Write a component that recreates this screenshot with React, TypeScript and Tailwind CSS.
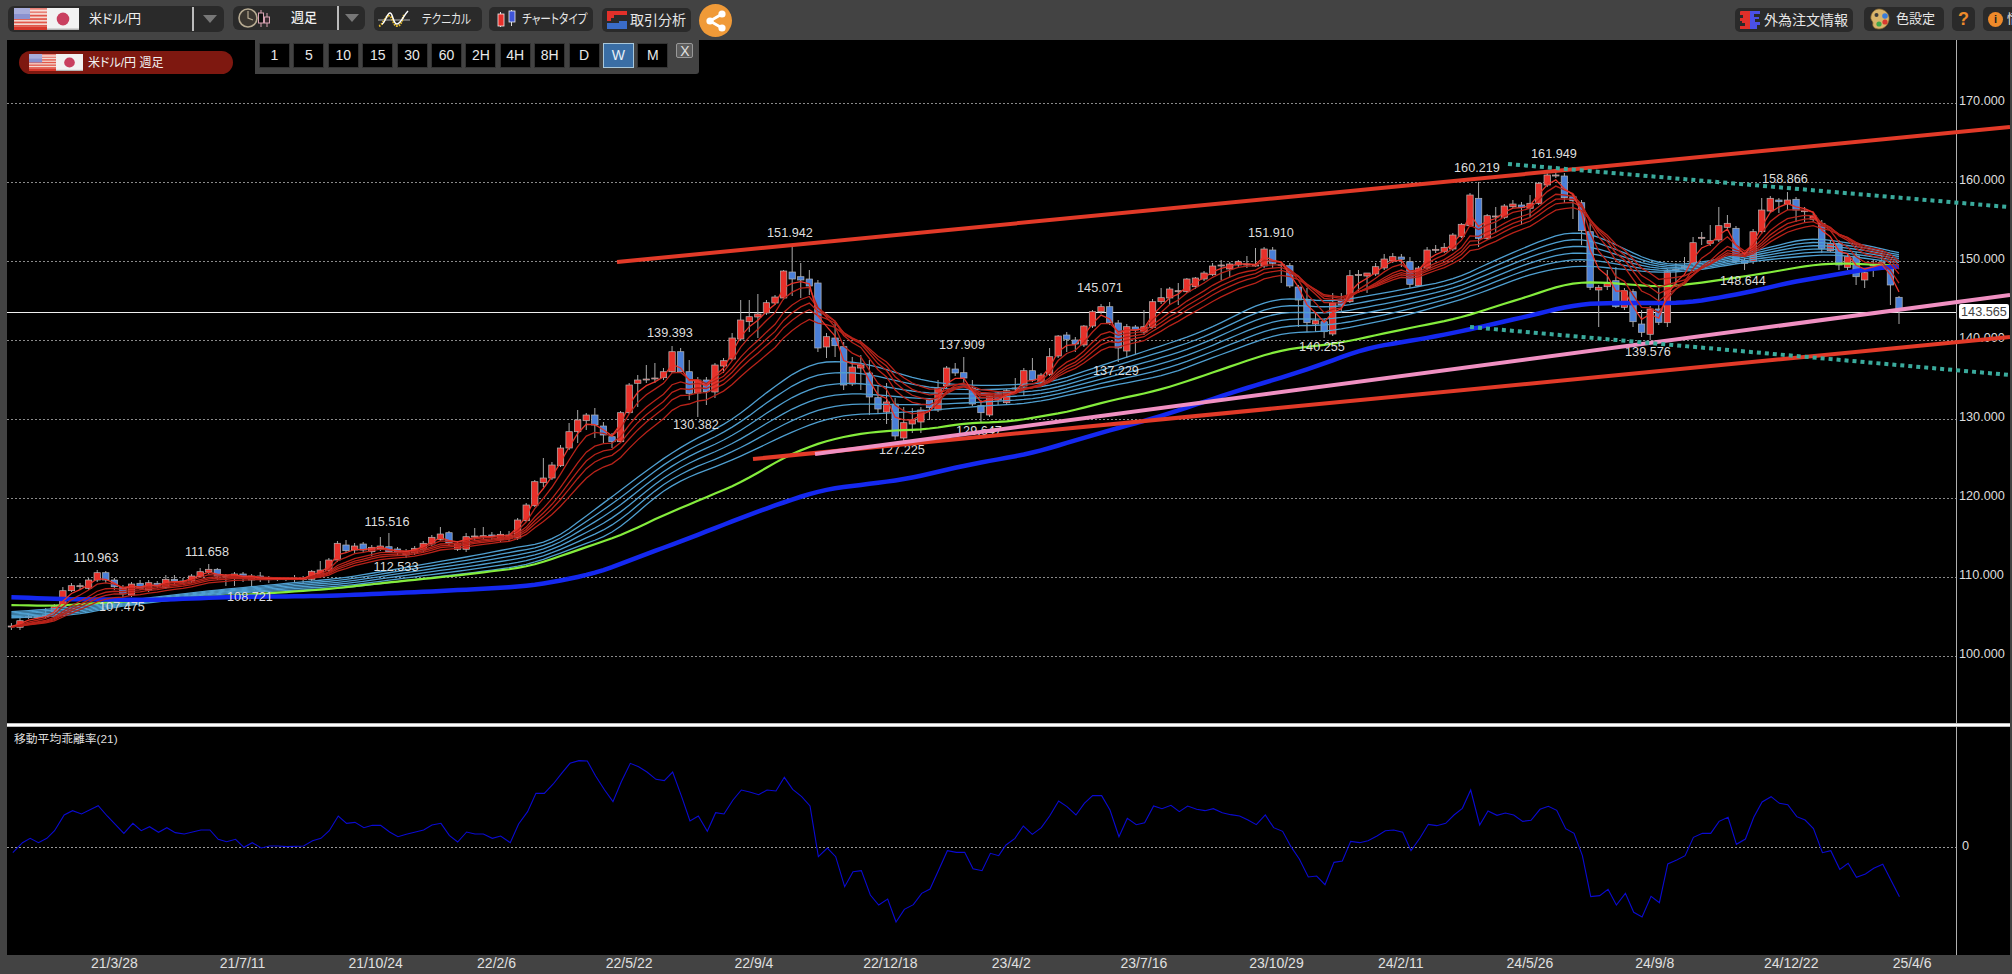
import React from "react";

type Candle = [number, number, number, number, number];
type Pt = [number, number];

// [body top, body bottom, wick top, wick bottom, 1 = up (red) / 0 = down (blue)], page pixels
const candles: Candle[] = [
  [626,626.8,623,630,1],[620.7,627.3,618,630,1],[616.7,617.5,615,619,1],[616.7,617.5,615,619,1],[615,616,608,618,1],
  [606.7,611.7,604,614,1],[590.7,606.7,587,608,1],[585.7,590.7,583,592,1],[585.7,586.5,583,590,1],[580,588.3,578,590,1],
  [572.7,580,570,582,1],[572.7,580,571,583,0],[580,586.7,578,590,0],[587.3,594,585,597,0],[584,595,582,597,1],
  [583.3,588.3,580,590,0],[582.7,590,580,592,1],[583.3,586,581,588,0],[579.3,587.3,575,589,1],[579.3,581,575,584,0],
  [581,581.7,578,584,1],[576,581,574,583,1],[571.7,576.7,568,578,1],[569.3,572,564,574,1],[569.3,576,568,580,0],
  [576,576.7,574,586,1],[574,578.3,572,586,1],[574,578.7,572,582,0],[576,580,574,587,1],[576,579.3,572,582,0],
  [578.7,579.3,576,583,1],[578.7,579.3,577,581,1],[578.7,579.3,577,581,1],[578.7,579.3,575,582,1],[578.7,579.3,576,583,1],
  [571.3,579.3,570,581,1],[570,575,561,577,1],[560,570.7,558,572,1],[543.3,560,541,562,1],[545,550.7,540,553,0],
  [546,550,543,553,1],[544,550,542,553,0],[547.3,551.7,545,556,1],[546,548.7,537,551,1],[546.7,551.7,533,553,0],
  [549,552.3,547,556,0],[551.7,555,549,558,1],[548.3,552.7,546,555,1],[543.3,549.3,541,552,1],[537.3,544,535,546,1],
  [534,539.3,527,541,1],[532.7,542.7,531,545,0],[543.3,549.3,541,551,1],[536.7,549.3,533,552,1],[536,536.8,528,540,1],
  [535.7,536.5,527,539,1],[535,536.2,532,540,0],[534.3,539.3,531,542,1],[535,538.3,531,541,1],[520,538,518,540,1],
  [505,520.7,503,522,1],[481.7,505.7,480,507,1],[478,482.7,458,487,1],[465,478,462,480,1],[448,465.7,445,467,1],
  [431.7,448,423,450,1],[420,431.7,410,443,1],[415,420.7,413,430,1],[415,425,408,438,0],[426,435,422,443,0],
  [436.7,441.7,433,448,0],[412.7,441.7,411,443,1],[385,412.7,383,414,1],[380,383.3,375,407,1],[379,379.8,365,383,1],
  [378,378.8,363,383,1],[371.7,377.7,368,380,1],[351.7,371.7,346,373,1],[351.7,371.7,348,373,0],[371.7,393.3,360,400,0],
  [380,393,377,417,1],[380,391.7,377,405,0],[365,392,363,398,1],[360.7,366,358,373,1],[338,359,333,361,1],
  [320,339,300,341,1],[316.7,321.7,300,332,1],[314,317,294,338,1],[302.7,313,300,315,1],[297,303,295,305,1],
  [271,298,270,300,1],[272,279,247,296,0],[276.7,280,263,298,0],[279,286,270,295,0],[283,348,280,352,0],
  [336.7,347,333,358,1],[338,345.7,322,357,0],[346.7,385,342,390,0],[367,384,357,386,1],[365,368,355,390,1],
  [373,397,360,415,0],[397.7,409,385,413,0],[402,412,383,424,1],[404,436,398,440,0],[422.7,438,407,441,1],
  [420,424,408,433,1],[410,422,407,433,1],[400,407.7,398,420,0],[387.7,410,380,412,1],[368,385.7,366,388,1],
  [369,373,363,376,0],[372.7,378,357,383,0],[388,404,380,406,0],[405.7,412.7,400,422,0],[396.7,415,393,417,1],
  [393,400,391,405,0],[390.7,402.7,389,405,1],[388,388.8,378,392,1],[370.7,386,368,395,1],[370.7,380,358,382,0],
  [375,382,373,385,1],[356.7,374.3,348,376,1],[336,356,335,358,1],[335,339.3,332,352,0],[340,344,337,352,0],
  [326,345,325,347,1],[311.7,326,310,328,1],[306.7,311.7,304,314,1],[306.7,322.7,302,325,0],[323,348,320,362,0],
  [326.7,351,324,358,1],[327,330,325,355,0],[326.7,332,310,335,1],[301.7,327.3,299,329,1],[297.7,301.7,288,304,1],
  [289,298,287,305,1],[290.7,291.5,283,305,1],[279,291.7,278,293,1],[278,286.7,277,289,1],[273,279,271,281,1],
  [266,274.7,263,276,1],[265,265.8,260,280,1],[264,269,262,277,1],[261.7,265,260,267,1],[264,265,256,268,1],
  [265,265.8,248,267,1],[249,266,247,268,1],[250,263.3,247,268,0],[264.3,265,262,283,1],[265.7,286,263,288,0],
  [287,300,285,327,0],[300.7,322.7,288,332,0],[320.7,324,313,332,1],[321.7,331.7,319,338,0],[303,334,293,336,1],
  [301,305,293,313,0],[275.7,301.7,270,303,1],[274.5,275.3,270,293,1],[273,276,273,293,1],[266.7,274,263,276,1],
  [259,268,254,270,1],[256.7,261,253,263,1],[257,259.3,254,267,0],[261.7,284.3,257,288,0],[268,285.7,266,287,1],
  [250,268,247,270,1],[249.3,250,245,253,1],[247.3,251.3,243,253,1],[235,249,233,251,1],[224.3,236.7,223,238,1],
  [195,225.7,193,227,1],[198.3,238.3,182,247,0],[215.7,238.3,214,240,1],[216,216.8,207,233,1],[206,217.3,204,219,1],
  [204,206.7,200,208,1],[205,207.3,202,225,0],[203.3,208.3,195,217,1],[183.3,203.3,182,205,1],[175,185,172,187,1],
  [175,175.8,172,178,1],[176,197.7,173,203,0],[196.7,200.7,194,219,0],[202.7,230.7,200,245,0],[231.7,287.3,223,290,0],
  [287.3,290,285,327,1],[282.7,286.7,270,290,1],[280.7,306.7,267,308,0],[290.7,307.3,288,310,1],[291.7,321.7,289,327,0],
  [324,332.3,310,337,0],[309,334.3,306,340,1],[309,322.3,288,325,0],[271.7,322.7,269,327,1],[269.3,270,263,287,1],
  [266.7,267.5,257,270,1],[242.7,263.3,237,265,1],[237.3,238,232,245,1],[240.7,243.3,225,246,1],[225.7,240,207,242,1],
  [223.3,227.3,215,229,1],[228.3,261.7,226,264,0],[260.7,263.3,258,270,0],[231.7,261.7,229,264,1],[210,231.7,198,234,1],
  [198.3,211,196,213,1],[200,201.7,198,213,0],[200,204,192,210,1],[199.3,210,197,222,0],[210.7,211.5,207,223,1],
  [216,219.3,212,222,1],[223.3,248.3,220,253,0],[243.3,250.7,240,252,1],[243.3,265,240,270,0],[256.7,267.3,254,270,1],
  [256,276.7,252,285,0],[272.7,280,270,288,1],[265,265.8,260,277,1],[262.3,263.5,253,266,1],[268.3,285,260,305,0],
  [297.3,309,296,324,0],
];

const candleX = (i: number) => 11.4 + 8.58 * i;

const longTop: Pt[] = [
  [11,612],[76,607],[115,602],[207,591],[344,578],[478,555],[528,545],[550,543],[617,493],[650,468],[680,447],[733,420],
  [773,387],[810,363],[833,361],[867,363],[893,372],[933,383],[983,386],[1050,383],[1100,366],[1200,333],[1267,300],
  [1293,298],[1333,302],[1400,290],[1453,280],[1500,258],[1550,237],[1577,230],[1600,237],[1633,253],[1660,265],
  [1693,264],[1733,256],[1780,245],[1810,237],[1840,242],[1880,247],[1900,255],
];
const longBottom: Pt[] = [
  [11,618],[76,615],[115,607],[230,593],[344,588],[478,572],[528,565],[550,557],[617,532],[650,500],[680,480],[733,460],
  [800,428],[840,415],[893,413],[933,410],[983,406],[1033,403],[1100,388],[1167,375],[1233,350],[1280,333],[1333,331],
  [1400,317],[1467,298],[1533,273],[1577,265],[1600,267],[1660,273],[1700,270],[1740,263],[1783,258],[1833,254],[1900,263],
];
const green: Pt[] = [
  [11,605],[54,606],[96,603],[153,600],[199,597],[245,595],[329,589],[383,583],[452,576],[528,567],[555,558],[630,532],
  [650,521],[747,480],[773,463],[807,447],[840,437],[880,431],[933,429],[963,423],[1007,422],[1050,415],[1077,410],
  [1100,403],[1160,390],[1200,377],[1243,362],[1280,350],[1340,343],[1400,330],[1460,318],[1500,305],[1533,295],
  [1567,283],[1600,282],[1660,287],[1693,284],[1733,278],[1773,272],[1810,265],[1840,263],[1900,266],
];
const bigBlue: Pt[] = [
  [11,597],[57,599],[153,600],[230,597],[325,596],[421,592],[517,587],[555,582],[600,572],[641,556],[690,538],[720,526],
  [770,507],[821,490],[907,479],[967,465],[1033,453],[1100,433],[1155,418],[1240,390],[1300,372],[1367,348],[1433,337],
  [1467,330],[1533,315],[1573,305],[1600,303],[1687,303],[1717,298],[1750,292],[1787,283],[1833,275],[1867,269],[1900,266],
];

// traced oscillator, x and y in crop units (x / 1.558, 710 + y / 3)
const oscA: Pt[] = [
  [20,428],[35,398],[47,385],[60,398],[73,385],[85,362],[100,315],[113,302],[127,312],[153,287],[167,318],[193,370],[207,340],
  [220,362],[233,350],[247,367],[260,353],[273,368],[287,372],[313,360],[327,360],[340,388],[353,395],[367,388],[380,412],
  [393,398],[407,414],[420,408],[433,408],[447,410],[473,408],[487,392],[500,385],[513,362],[527,318],[540,340],[553,337],
  [567,353],[580,346],[593,346],[607,366],[620,380],[633,373],[660,360],[673,345],[687,340],[700,376],[713,396],[727,366],
  [740,372],[753,372],[767,385],[780,378],[795,398],[808,342],[822,305],[835,250],[848,250],[862,222],[875,190],[888,160],
  [902,152],[915,153],[928,198],[942,240],[955,275],[968,215],[982,160],[995,170],[1008,186],[1022,208],[1035,212],[1048,186],
  [1062,260],[1075,333],[1088,318],[1102,364],[1115,308],[1128,312],[1142,270],[1155,240],[1168,246],[1182,254],[1195,240],
  [1209,243],[1222,202],[1235,238],[1249,260],[1262,288],[1275,440],[1289,414],[1302,440],[1316,530],[1329,485],[1342,482],
  [1356,555],[1369,585],[1383,567],[1396,636],[1409,598],[1423,584],[1436,550],[1449,537],[1463,478],[1476,422],[1490,427],
  [1503,427],[1516,476],[1530,482],[1543,430],[1556,437],
];
const oscB: Pt[] = [
  [0,405],[14,385],[27,348],[41,373],[55,353],[68,318],[82,273],[95,290],[109,315],[122,280],[135,257],[149,257],[162,300],
  [176,380],[189,325],[203,344],[216,338],[230,288],[243,296],[257,286],[270,305],[283,288],[297,298],[310,302],[323,296],
  [337,308],[350,314],[364,318],[377,330],[390,344],[404,315],[417,353],[431,364],[444,410],[457,447],[471,501],[484,498],
  [497,524],[511,457],[524,453],[537,394],[551,398],[564,392],[578,378],[591,362],[604,360],[618,367],[631,422],[645,384],
  [658,343],[671,347],[685,340],[698,315],[711,295],[724,240],[738,345],[751,303],[765,316],[778,309],[791,315],[805,334],
  [818,331],[832,298],[845,289],[858,301],[872,356],[885,370],[898,437],[911,560],[925,557],[938,538],[951,585],[965,550],
  [978,607],[991,621],[1005,559],[1018,578],[1031,462],[1045,450],[1058,437],[1071,382],[1085,370],[1098,370],[1111,334],
  [1125,322],[1138,403],[1152,387],[1165,322],[1178,276],[1192,260],[1205,280],[1218,284],[1232,320],[1245,330],[1258,356],
  [1272,428],[1285,422],[1299,478],[1312,460],[1325,502],[1339,492],[1352,475],[1366,463],[1392,560],
];

const peaks: [string, number, number][] = [
  ["110.963",96,557],["107.475",122,606],["111.658",207,551],["108.721",250,596],["115.516",387,521],["112.533",396,566],
  ["139.393",670,332],["130.382",696,424],["151.942",790,232],["127.225",902,449],["137.909",962,344],["129.647",979,430],
  ["145.071",1100,287],["137.229",1116,370],["151.910",1271,232],["140.255",1322,346],["160.219",1477,167],["161.949",1554,153],
  ["158.866",1785,178],["148.644",1743,280],["139.576",1648,351],
];

const grid: [string, number][] = [
  ["170.000",103],["160.000",182],["150.000",261],["140.000",340],["130.000",419],["120.000",498],["110.000",577],["100.000",656],
];

const dates = ["21/3/28","21/7/11","21/10/24","22/2/6","22/5/22","22/9/4","22/12/18","23/4/2","23/7/16","23/10/29","24/2/11","24/5/26","24/9/8","24/12/22","25/4/6"];
const frames = ["1","5","10","15","30","60","2H","4H","8H","D","W","M"];

const toPoints = (pts: Pt[]) => pts.map((p) => `${p[0]},${p[1]}`).join(" ");

const interp = (pts: Pt[], x: number) => {
  if (x <= pts[0][0]) return pts[0][1];
  for (let i = 1; i < pts.length; i++) {
    if (x <= pts[i][0]) {
      const t = (x - pts[i - 1][0]) / (pts[i][0] - pts[i - 1][0]);
      return pts[i - 1][1] + (pts[i][1] - pts[i - 1][1]) * t;
    }
  }
  return pts[pts.length - 1][1];
};

// traced lines have corners, the real averages don't
const smooth = (pts: Pt[], x: number) => {
  let sum = 0;
  for (let k = -2; k <= 2; k++) sum += interp(pts, x + k * 8.58);
  return sum / 5;
};

const sampled = (pts: Pt[]): Pt[] => candles.map((_, i) => [candleX(i), smooth(pts, candleX(i))]);

const ema = (period: number): Pt[] => {
  const k = 2 / (period + 1);
  let v = 627;
  return candles.map((c, i) => {
    const close = c[4] ? c[0] : c[1];
    v = close * k + v * (1 - k);
    return [candleX(i), v];
  });
};

const longLine = (t: number): Pt[] =>
  candles.map((_, i) => {
    const x = candleX(i);
    return [x, smooth(longTop, x) * (1 - t) + smooth(longBottom, x) * t];
  });

const oscPoints = toPoints([
  ...oscA.map((p): Pt => [p[0] / 1.558, 710 + p[1] / 3]),
  ...oscB.map((p): Pt => [1006 + p[0] / 1.558, 710 + p[1] / 3]),
]);

function FlagUS({ className }: { className: string }) {
  return (
    <svg viewBox="0 0 33 22" preserveAspectRatio="none" className={className}>
      <rect width="33" height="22" fill="#f4d8d0" />
      {[0, 3.4, 6.8, 10.2, 13.6, 17].map((y) => (
        <rect key={y} y={y} width="33" height="1.7" fill="#e2574a" />
      ))}
      <rect y="18.7" width="33" height="3.3" fill="#d8392c" />
      <rect width="16" height="11" fill="#8b92cf" />
      <rect width="33" height="6" fill="#ffffff" opacity="0.25" />
    </svg>
  );
}

function FlagJP({ className }: { className: string }) {
  return (
    <svg viewBox="0 0 33 22" preserveAspectRatio="none" className={className}>
      <rect width="33" height="22" fill="#f2f2f2" />
      <rect y="20.5" width="33" height="1.5" fill="#b5b5b5" />
      <ellipse cx="16.5" cy="11" rx="6.5" ry="6.5" fill="#c93f5f" />
    </svg>
  );
}

function ClockIcon() {
  return (
    <svg viewBox="0 0 34 22" className="h-[22px] w-[34px] shrink-0">
      <circle cx="10" cy="11" r="9" fill="#3a3630" stroke="#b7ab92" strokeWidth="1.6" />
      <path d="M10 4v7l5 2" fill="none" stroke="#b7ab92" strokeWidth="1.2" />
      <path d="M23 3v17M29 6v14" stroke="#d9a3b4" strokeWidth="1" />
      <rect x="20.5" y="6" width="5" height="10" fill="#111111" stroke="#d9a3b4" />
      <rect x="26.5" y="10" width="5" height="6" fill="#3a2a30" stroke="#d9a3b4" />
    </svg>
  );
}

function TechIcon() {
  return (
    <svg viewBox="0 0 32 18" className="h-[18px] w-[32px] shrink-0">
      <path d="M0 10h32" stroke="#bbbbbb" strokeWidth="0.9" />
      <path d="M1 16c4-1 6-10 10-10s4 10 8 10 5-6 7-11" fill="none" stroke="#e6bc2c" strokeWidth="2.2" strokeDasharray="1.6 1.1" />
      <path d="M4 14c3-1 5-11 8-11s3 11 7 11 6-8 11-13" fill="none" stroke="#ffffff" strokeWidth="1.5" />
    </svg>
  );
}

function CandleIcon() {
  return (
    <svg viewBox="0 0 20 18" className="h-[18px] w-[20px] shrink-0">
      <path d="M3.5 2v15M14.500 0v16" stroke="#dddddd" strokeWidth="1" />
      <rect x="1" y="4" width="6" height="12" fill="#e8302a" stroke="#eeeeee" strokeWidth="0.8" />
      <rect x="12" y="1" width="6" height="11" fill="#3f55d8" stroke="#eeeeee" strokeWidth="0.8" />
    </svg>
  );
}

function AnalysisIcon() {
  return (
    <svg viewBox="0 0 20 18" className="h-[18px] w-[20px] shrink-0">
      <path d="M0 0h20v4h-13v3h-3v3h-4z" fill="#e2302a" />
      <path d="M0 12h12v-2h8v8h-20z" fill="#3a6cc8" />
    </svg>
  );
}

function ForexIcon() {
  return (
    <svg viewBox="0 0 20 18" className="h-[18px] w-[20px] shrink-0">
      <path d="M1 0h9v18h-10v-3h5v-3h-3v-2h-2v-3h3v-3h-4v-3z" fill="#e2302a" />
      <path d="M10 0h10v3h-6v3h5v2h-4v3h5v3h-3v4h-7z" fill="#4a50e8" />
    </svg>
  );
}

function PaletteIcon() {
  return (
    <svg viewBox="0 0 20 22" className="h-[22px] w-[20px] shrink-0">
      <path d="M9 1c6 0 11 5 10 11-1 6-6 9-10 9-5 0-7-3-6-6 0-2-3-3-2-7 1-4 4-7 8-7z" fill="#d9b46a" stroke="#8a6a30" strokeWidth="0.7" />
      <circle cx="6.500" cy="7" r="2" fill="#3a3a3a" />
      <circle cx="15" cy="8" r="2.800" fill="#3a7cd8" />
      <circle cx="15" cy="14" r="2.600" fill="#d83a30" />
      <circle cx="9" cy="16" r="2.600" fill="#3fa84a" />
    </svg>
  );
}

function ShareIcon() {
  return (
    <svg viewBox="0 0 24 24" className="h-[24px] w-[24px]">
      <path d="M18 5L6 12l12 7" fill="none" stroke="#ffffff" strokeWidth="2.800" />
      <circle cx="18" cy="5" r="3.600" fill="#ffffff" />
      <circle cx="6" cy="12" r="3.600" fill="#ffffff" />
      <circle cx="18" cy="19" r="3.600" fill="#ffffff" />
    </svg>
  );
}

function Arrow() {
  return <div className="h-0 w-0 border-x-[7px] border-t-[8px] border-x-transparent border-t-[#777777]" />;
}

const barBtn = "mt-[7px] flex h-[24px] shrink-0 items-center rounded-[5px] bg-[#2a2a2a] text-[#e6e6e6]";

function Toolbar() {
  return (
    <div className="flex h-[40px] shrink-0 items-start overflow-hidden bg-[#434343] pl-[8px] text-[13px]">
      <div className="mt-[6px] flex h-[26px] w-[216px] shrink-0 items-center rounded-[6px] bg-[#2a2a2a] pl-[6px] text-[#f0f0f0]">
        <FlagUS className="h-[22px] w-[33px]" />
        <FlagJP className="h-[22px] w-[32px]" />
        <span className="ml-[10px] w-[103px]">米ドル/円</span>
        <div className="h-[24px] w-[2px] bg-[#bbbbbb]" />
        <div className="ml-[9px]"><Arrow /></div>
      </div>
      <div className="mt-[6px] ml-[9px] flex h-[24px] w-[132px] shrink-0 items-center rounded-[6px] bg-[#2a2a2a] pl-[5px] text-[#f0f0f0]">
        <ClockIcon />
        <span className="ml-[19px] w-[46px] font-medium">週足</span>
        <div className="h-[24px] w-[2px] bg-[#bbbbbb]" />
        <div className="ml-[6px]"><Arrow /></div>
      </div>
      <div className={`${barBtn} ml-[9px] w-[108px] pl-[4px]`}>
        <TechIcon />
        <span className="ml-[12px] shrink-0 origin-left scale-x-[0.82] whitespace-nowrap">テクニカル</span>
      </div>
      <div className={`${barBtn} ml-[7px] w-[104px] pl-[8px]`}>
        <CandleIcon />
        <span className="ml-[5px] shrink-0 origin-left scale-x-[0.82] whitespace-nowrap">チャートタイプ</span>
      </div>
      <div className={`${barBtn} mt-[8px] ml-[9px] w-[89px] pl-[5px] text-[14px]`}>
        <AnalysisIcon />
        <span className="ml-[3px] whitespace-nowrap">取引分析</span>
      </div>
      <div className="mt-[4px] ml-[8px] flex h-[33px] w-[33px] shrink-0 items-center justify-center rounded-full bg-[#f09a38]">
        <ShareIcon />
      </div>
      <div className={`${barBtn} mt-[8px] ml-auto w-[118px] pl-[5px] text-[14px]`}>
        <ForexIcon />
        <span className="ml-[4px] whitespace-nowrap">外為注文情報</span>
      </div>
      <div className={`${barBtn} ml-[11px] w-[80px] pl-[6px]`}>
        <PaletteIcon />
        <span className="ml-[6px]">色設定</span>
      </div>
      <div className={`${barBtn} ml-[8px] w-[23px] justify-center text-[18px] font-bold text-[#ee8a2a]`}>?</div>
      <div className="mt-[7px] ml-[8px] flex h-[24px] w-[29px] shrink-0 items-center overflow-hidden rounded-l-[5px] bg-[#2a2a2a] pl-[5px] text-[#e6e6e6]">
        <div className="flex h-[15px] w-[15px] shrink-0 items-center justify-center rounded-full bg-[#ee8a2a] text-[11px] font-bold text-[#222222]">i</div>
        <span className="ml-[4px] shrink-0">情報</span>
      </div>
    </div>
  );
}

function PriceChart() {
  const redLines = [15, 12, 10, 8, 5, 3];
  return (
    <svg viewBox="7 40 2003 683" className="block h-[683px] w-[2003px]">
      {grid.map(([label, y]) => (
        <line key={label} x1="7" x2="1956" y1={y + 0.5} y2={y + 0.5} stroke="#8a8a8a" strokeWidth="1" strokeDasharray="2 2" />
      ))}
      <line x1="7" x2="1956" y1="312.500" y2="312.500" stroke="#f0f0f0" strokeWidth="1" />
      <line x1="1956.500" x2="1956.500" y1="40" y2="723" stroke="#b0b0b0" strokeWidth="1" />

      {candles.map((c, i) => {
        const x = candleX(i);
        return (
          <g key={i}>
            <line x1={x} x2={x} y1={c[2]} y2={c[3]} stroke="#a8a8a8" strokeWidth="1" />
            <rect x={x - 3.2} y={c[0]} width="6.4" height={Math.max(c[1] - c[0], 1)} fill={c[4] ? "#e8302a" : "#4a7fd8"} stroke="#b4b4b4" strokeWidth="0.7" />
          </g>
        );
      })}

      {[0, 0.2, 0.4, 0.6, 0.8, 1].map((t) => (
        <polyline key={t} points={toPoints(longLine(t))} fill="none" stroke="#4f9fd0" strokeWidth="1.3" />
      ))}
      <polyline points={toPoints(sampled(green))} fill="none" stroke="#84ec3c" strokeWidth="2.200" />
      <polyline points={toPoints(sampled(bigBlue))} fill="none" stroke="#1428f0" strokeWidth="4.500" />
      {redLines.map((p) => (
        <polyline key={p} points={toPoints(ema(p))} fill="none" stroke={p === 3 ? "#e6342a" : "#b8231a"} strokeWidth="1.3" />
      ))}

      <g fontFamily="'Liberation Sans', sans-serif" fontSize="12.7" fill="#dedede" textAnchor="middle">
        {peaks.map(([label, x, y]) => (
          <text key={label} x={x} y={y + 4.500}>{label}</text>
        ))}
      </g>
      <g fontFamily="'Liberation Sans', sans-serif" fontSize="12.7" fill="#dedede">
        {grid.map(([label, y]) => (
          <text key={label} x="1959" y={y + 1.500}>{label}</text>
        ))}
      </g>

      <line x1="617" y1="262" x2="2010" y2="127" stroke="#e23a28" strokeWidth="4" />
      <line x1="753" y1="459" x2="2010" y2="337" stroke="#e23a28" strokeWidth="4" />
      <line x1="815" y1="454" x2="2010" y2="295" stroke="#f090c2" strokeWidth="4" />
      <line x1="1508" y1="164" x2="2008" y2="207" stroke="#3aaa9c" strokeWidth="4" strokeDasharray="4 4" />
      <line x1="1470" y1="327" x2="2010" y2="375" stroke="#3aaa9c" strokeWidth="4" strokeDasharray="4 4" />

      <rect x="1959" y="304" width="50" height="15" rx="2" fill="#ffffff" />
      <text x="1984" y="316" fontFamily="'Liberation Sans', sans-serif" fontSize="12.700" fill="#444444" textAnchor="middle">143.565</text>
    </svg>
  );
}

function Oscillator() {
  return (
    <svg viewBox="7 727 2003 228" className="block h-[228px] w-[2003px]">
      <line x1="7" x2="1956" y1="847.500" y2="847.500" stroke="#9a9a9a" strokeWidth="1" strokeDasharray="2 2" />
      <line x1="1956.500" x2="1956.500" y1="727" y2="955" stroke="#b0b0b0" strokeWidth="1" />
      <polyline points={oscPoints} fill="none" stroke="#0a0ad2" strokeWidth="1.100" />
      <text x="1962" y="850" fontFamily="'Liberation Sans', sans-serif" fontSize="12.700" fill="#dedede">0</text>
    </svg>
  );
}

export default function App() {
  return (
    <div className="flex h-[974px] w-[2012px] flex-col overflow-hidden bg-[#434343] [font-family:'Liberation_Sans','Noto_Sans_CJK_JP',sans-serif] [font-feature-settings:'palt']">
      <Toolbar />
      <div className="relative ml-[7px] mr-[2px] flex flex-col bg-black">
        <PriceChart />
        <div className="h-[4px] border-y border-[#bcbcbc] bg-white" />
        <Oscillator />

        <div className="absolute top-[11px] left-[12px] flex h-[23px] w-[214px] items-center rounded-full bg-[#7e1810] pl-[10px] text-[12px] text-[#f2f2f2]">
          <FlagUS className="h-[17px] w-[27px]" />
          <FlagJP className="h-[17px] w-[27px]" />
          <span className="ml-[5px]">米ドル/円 週足</span>
        </div>

        <div className="absolute top-0 left-[248px] flex h-[34px] w-[444px] items-start rounded-br-[3px] bg-[#434343] pt-[3px] pl-[4px]">
          <div className="flex gap-[3.4px]">
            {frames.map((f) => (
              <div
                key={f}
                className={
                  f === "W"
                    ? "flex h-[25px] w-[31px] items-center justify-center border border-[#a8c8dc] bg-[#3a6ea5] text-[14px] text-[#e8f0f8]"
                    : "flex h-[25px] w-[31px] items-center justify-center border border-[#333333] bg-black text-[14px] text-[#e8e8e8]"
                }
              >
                {f}
              </div>
            ))}
          </div>
          <div className="ml-[8px] flex h-[15px] w-[17px] items-center justify-center rounded-[2px] border border-[#999999] bg-[#5c5c5c] text-[14px] leading-none text-[#e0e0e0]">X</div>
        </div>

        <div className="absolute top-[691px] left-[7px] text-[11.8px] text-[#dedede]">移動平均乖離率(21)</div>
      </div>
      <div className="flex h-[19px] items-center overflow-hidden pb-[3px] pl-[91px] text-[14px] text-[#e0e0e0]">
        {dates.map((d) => (
          <span key={d} className="w-[128.7px] shrink-0">{d}</span>
        ))}
      </div>
    </div>
  );
}
